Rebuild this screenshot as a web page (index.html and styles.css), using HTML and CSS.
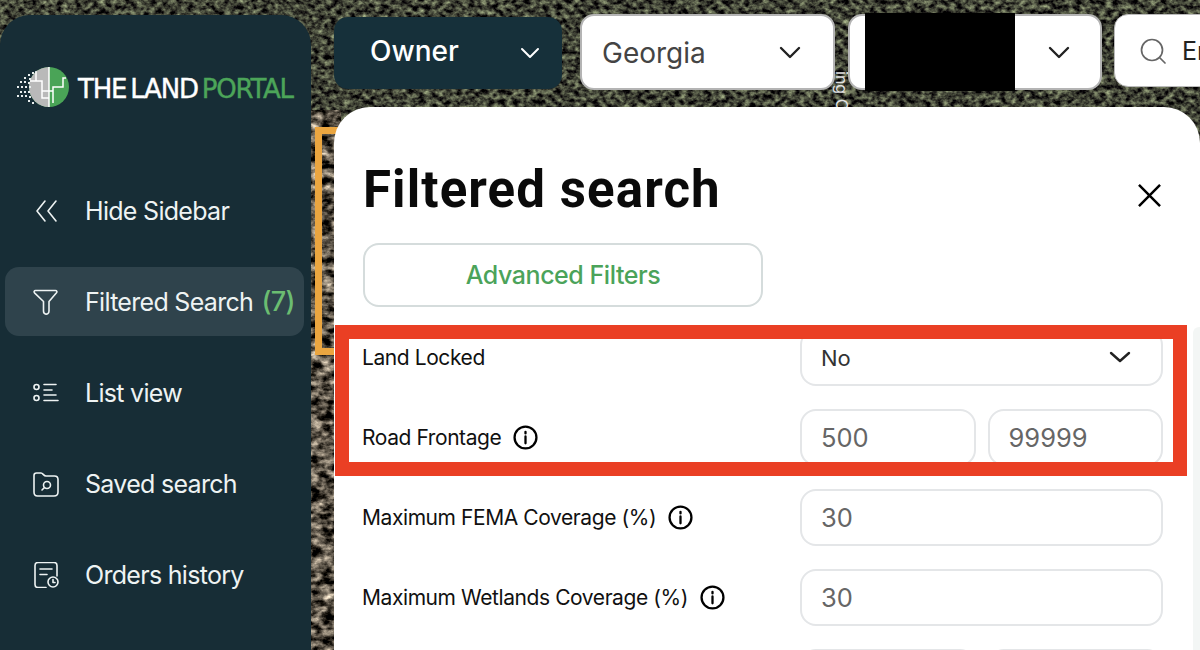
FILE: index.html
```html
<!DOCTYPE html>
<html lang="en">
<head>
<meta charset="utf-8">
<title>The Land Portal</title>
<link rel="stylesheet" href="styles.css">
</head>
<body>
<svg class="map" width="1200" height="650" aria-hidden="true">
  <defs>
    <filter id="forest" x="0" y="0" width="100%" height="100%" color-interpolation-filters="sRGB">
      <feTurbulence type="fractalNoise" baseFrequency="0.16 0.2" numOctaves="3" seed="7"/>
      <feColorMatrix type="matrix" values="1.05 0 0 0 -0.28  1.15 0 0 0 -0.32  0.85 0 0 0 -0.22  0 0 0 0 1"/>
    </filter>
    <filter id="field" x="0" y="0" width="100%" height="100%" color-interpolation-filters="sRGB">
      <feTurbulence type="fractalNoise" baseFrequency="0.09 0.14" numOctaves="4" seed="12"/>
      <feColorMatrix type="matrix" values="1.7 0 0 0 -0.5  1.6 0 0 0 -0.48  1.45 0 0 0 -0.45  0 0 0 0 1"/>
    </filter>
  </defs>
  <rect width="1200" height="650" filter="url(#forest)"/>
  <rect x="311" y="110" width="30" height="540" filter="url(#field)"/>
</svg>
<div class="bracket"></div>

<div class="app">
  <aside class="sidebar">
    <div class="logo">
      <svg class="logo-mark" width="54" height="40" viewBox="0 0 54 40">
        <circle cx="33" cy="20" r="20" fill="#4aa457"/>
        <path d="M33 0A20 20 0 0 0 33 40Z" fill="#b9b9b9"/>
        <path d="M33 0V40M20 4V14H26V24H33M33 24H37V20H47V11H50M37 24V36M20 14H14M26 24V31H33" fill="none" stroke="#fff" stroke-width="1.5"/>
        <g fill="#e8eeee">
          <rect x="16" y="5" width="2" height="2"/><rect x="12" y="7" width="2" height="2"/><rect x="8" y="10" width="2" height="2"/>
          <rect x="13" y="11" width="2" height="2"/><rect x="4" y="14" width="2" height="2"/><rect x="8" y="14" width="2" height="2"/>
          <rect x="12" y="15" width="2" height="2"/><rect x="1" y="19" width="2" height="2"/><rect x="5" y="19" width="2" height="2"/>
          <rect x="9" y="19" width="2" height="2"/><rect x="13" y="19" width="2" height="2"/><rect x="4" y="24" width="2" height="2"/>
          <rect x="8" y="24" width="2" height="2"/><rect x="12" y="24" width="2" height="2"/><rect x="1" y="28" width="2" height="2"/>
          <rect x="5" y="28" width="2" height="2"/><rect x="9" y="28" width="2" height="2"/><rect x="13" y="29" width="2" height="2"/>
          <rect x="12" y="33" width="2" height="2"/><rect x="16" y="35" width="2" height="2"/>
        </g>
      </svg>
      <span class="logo-text">THE LAND <em>PORTAL</em></span>
    </div>
    <nav class="nav">
      <a class="nav-item">
        <svg class="nav-icon" viewBox="0 0 26 26"><path d="M12 3 4 13l8 10M23 3l-8 10 8 10"/></svg>
        <span>Hide Sidebar</span>
      </a>
      <a class="nav-item active">
        <svg class="nav-icon" viewBox="0 0 26 26"><path d="M2.5 1.5H22.5C23.8 1.5 24.3 2.8 23.5 3.8L16 12.5V22C16 24.5 14 25.5 12.5 25C11 24.6 10.5 23.5 10.5 22V12.5L1.5 3.8C.7 2.8 1.2 1.5 2.5 1.5Z"/></svg>
        <span>Filtered Search <b>(7)</b></span>
      </a>
      <a class="nav-item">
        <svg class="nav-icon" viewBox="0 0 26 26"><circle cx="3.5" cy="7" r="2.5"/><circle cx="3.5" cy="18" r="2.5"/><path d="M11 4.5H23M11 10H19M11 15H23M11 20.5H25"/></svg>
        <span>List view</span>
      </a>
      <a class="nav-item">
        <svg class="nav-icon" viewBox="0 0 26 26"><path d="M1 4.5C1 2.8 2 2 3.5 2H8C10 2 10.5 5 13 5H21.5C23.8 5 25 6.5 25 8.5V21C25 23.5 23.5 25 21 25H4.5C2.3 25 1 23.5 1 21Z"/><circle cx="14" cy="14" r="3.5"/><path d="M11.5 16.5 9 19"/></svg>
        <span>Saved search</span>
      </a>
      <a class="nav-item">
        <svg class="nav-icon" viewBox="0 0 26 26"><path d="M13 25.5H5C3 25.5 2 24.5 2 22.5V3.5C2 1.5 3 .5 5 .5H21C23 .5 24 1.5 24 3.5V14"/><path d="M7 7H19M7 12.5H14"/><circle cx="20" cy="20" r="5"/><path d="M20 17.5V20.5H22"/></svg>
        <span>Orders history</span>
      </a>
    </nav>
  </aside>

  <main class="content">
    <span class="road-label">ing O</span>
    <div class="topbar">
      <div class="mode">
        <span>Owner</span>
        <svg class="chev chev-small" viewBox="0 0 20 12"><path d="M2 2l8 8 8-8"/></svg>
      </div>
      <div class="top-select state">
        <span>Georgia</span>
        <svg class="chev" viewBox="0 0 22 13"><path d="M2 2l9 9 9-9"/></svg>
      </div>
      <div class="top-select county">
        <span class="redacted"></span>
        <svg class="chev" viewBox="0 0 22 13"><path d="M2 2l9 9 9-9"/></svg>
      </div>
      <div class="search">
        <svg class="search-icon" viewBox="0 0 26 26"><circle cx="12" cy="12" r="10.5"/><path d="M19.5 19.5 25 25"/></svg>
        <span>Enter address</span>
      </div>
    </div>

    <section class="modal">
      <header class="modal-head">
        <h1>Filtered search</h1>
        <svg class="close" viewBox="0 0 24 24"><path d="M1 1l22 22M23 1 1 23"/></svg>
      </header>
      <button class="advanced" type="button">Advanced Filters</button>
      <div class="form">
        <div class="row">
          <label>Land Locked</label>
          <div class="control select"><span>No</span><svg class="chev chev-field" viewBox="0 0 22 13"><path d="M2 2l9 8 9-8"/></svg></div>
        </div>
        <div class="row">
          <label>Road Frontage <svg class="info" viewBox="0 0 24 24"><circle cx="12" cy="12" r="10.5"/><path d="M12 11v6.5M12 6.5v1.6"/></svg></label>
          <div class="pair"><div class="control">500</div><div class="control">99999</div></div>
        </div>
        <div class="row">
          <label>Maximum FEMA Coverage (%) <svg class="info" viewBox="0 0 24 24"><circle cx="12" cy="12" r="10.5"/><path d="M12 11v6.5M12 6.5v1.6"/></svg></label>
          <div class="control">30</div>
        </div>
        <div class="row">
          <label>Maximum Wetlands Coverage (%) <svg class="info" viewBox="0 0 24 24"><circle cx="12" cy="12" r="10.5"/><path d="M12 11v6.5M12 6.5v1.6"/></svg></label>
          <div class="control">30</div>
        </div>
        <div class="row">
          <label></label>
          <div class="pair"><div class="control"></div><div class="control"></div></div>
        </div>
      </div>
      <div class="scroll-track"></div>
    </section>
  </main>
</div>
<div class="highlight"></div>
</body>
</html>
```
FILE: styles.css
```css
* { box-sizing: border-box; }
html, body { margin: 0; width: 1200px; height: 650px; overflow: hidden; background: #2c3026; }
body { position: relative; font-family: "Inter", "Liberation Sans", sans-serif; color: #111; }

.map { position: absolute; inset: 0; display: block; }
.road-label {
  position: absolute; left: 822px; top: 82px; width: 40px; font-size: 16px; line-height: 18px; color: #e2e2e2;
  transform: rotate(90deg); white-space: nowrap;
}
.bracket {
  position: absolute; left: 315px; top: 127px; width: 40px; height: 228px;
  border: 7px solid #eba640; border-right: 0;
}
.highlight {
  position: absolute; left: 335px; top: 325px; width: 852px; height: 151px;
  border: 14px solid #ea3f24;
}

.app { position: relative; display: flex; height: 650px; }

/* Sidebar */
.sidebar {
  flex: none; width: 311px; margin-top: 15px; padding-top: 52px;
  background: #172d36; border-radius: 30px 30px 0 0;
}
.logo { display: flex; align-items: center; height: 40px; margin: 0 0 69px 16px; gap: 8px; }
.logo-mark { flex: none; }
.logo-text {
  margin-top: 4px;
  font-family: "DejaVu Sans", sans-serif; font-size: 26px; font-weight: 400; color: #fff; white-space: nowrap;
  letter-spacing: -1.22px; word-spacing: -3px; -webkit-text-stroke: .4px currentColor;
}
.logo-text em { font-style: normal; color: #4ca559; }

.nav { display: flex; flex-direction: column; gap: 22px; margin: 0 7px 0 5px; }
.nav-item {
  display: flex; align-items: center; gap: 26px; height: 69px; padding-left: 28px;
  border-radius: 14px; color: #eef3f3; font-size: 25px; letter-spacing: -0.7px; white-space: nowrap;
}
.nav-item.active { background: #2f434c; }
.nav-item b { margin-left: 2px; font-size: 27px; font-weight: 500; color: #6bbd71; }
.nav-icon { flex: none; width: 26px; height: 26px; fill: none; stroke: #eef3f3; stroke-width: 1.6; stroke-linecap: round; stroke-linejoin: round; }

/* Main column */
.content { flex: 1; min-width: 0; padding: 14px 0 0 23px; display: flex; flex-direction: column; overflow: hidden; }
.topbar { flex: none; display: flex; gap: 13px; height: 76px; margin-bottom: 17px; }
.mode {
  flex: none; width: 228px; height: 72px; margin: 3px 5px 0 0; padding: 0 22px 4px 36px;
  display: flex; align-items: center; justify-content: space-between;
  background: #16303a; border-radius: 14px; color: #fff; font-size: 28px; font-weight: 500;
}
.mode .chev { margin-top: 4px; }
.top-select {
  flex: none; position: relative; width: 255px; height: 76px; padding: 0 32px 0 20px;
  display: flex; align-items: center; justify-content: space-between;
  background: #fff; border: 2px solid #b4b4b4; border-radius: 14px; font-size: 28px; color: #444;
}
.top-select.state span { margin-top: 2px; }
.top-select.county { width: 254px; justify-content: flex-end; padding-right: 30px; }
.redacted { position: absolute; left: 15px; top: -3px; width: 150px; height: 78px; background: #000; }
.chev { flex: none; width: 22px; height: 13px; fill: none; stroke: #222; stroke-width: 2.4; stroke-linecap: round; stroke-linejoin: round; }
.chev-small { width: 20px; height: 12px; stroke: #fff; stroke-width: 2; }
.search {
  flex: none; width: 220px; height: 73px; margin-left: -1px; padding-left: 25px;
  display: flex; align-items: center; gap: 16px;
  background: #fff; border: 1px solid #bbb; border-radius: 14px; font-size: 25px; color: #222; white-space: nowrap;
}
.search-icon { flex: none; width: 26px; height: 26px; fill: none; stroke: #666; stroke-width: 1.7; stroke-linecap: round; }

/* Modal */
.modal {
  position: relative; flex: 1; min-height: 0; padding: 0 0 0 29px; overflow: hidden;
  background: #fff; border-radius: 36px 36px 0 0;
}
.modal-head { display: flex; align-items: center; justify-content: space-between; height: 136px; padding: 28px 39px 0 0; }
.modal-head h1 {
  margin: 0; font-family: "Roboto", sans-serif; font-size: 51px; font-weight: 700; letter-spacing: 1.1px; color: #0a0a0a;
}
.close { width: 23px; height: 23px; margin-top: 12px; fill: none; stroke: #000; stroke-width: 2.6; }
.advanced {
  display: block; width: 400px; height: 64px; padding: 0; background: #fff;
  border: 2px solid #d5dcdc; border-radius: 16px;
  font: 500 25px "Inter", sans-serif; letter-spacing: -.45px; color: #4ba35a;
}
.form { display: flex; flex-direction: column; gap: 23px; margin-top: 22px; }
.row { display: flex; align-items: center; height: 57px; }
.row label {
  flex: none; width: 437px; display: flex; align-items: center; gap: 12px; text-indent: -1px;
  font-size: 21px; letter-spacing: -.42px; color: #111; white-space: nowrap;
}
.info { flex: none; width: 25px; height: 25px; fill: none; stroke: #000; stroke-width: 2.2; stroke-linecap: round; }
.control {
  display: flex; align-items: center; width: 363px; height: 57px; padding: 0 19px;
  border: 2px solid #e4e6e8; border-radius: 16px; font-size: 25.5px; color: #666; background: #fff;
}
.select { justify-content: space-between; color: #333; font-size: 22px; padding-right: 30px; }
.chev-field { stroke: #222; }
.pair { display: flex; gap: 12px; width: 363px; }
.pair .control { width: 176px; }
.scroll-track { position: absolute; right: 0; top: 220px; bottom: 0; width: 7px; background: #f3f6f5; border-radius: 6px 0 0 0; }
```
